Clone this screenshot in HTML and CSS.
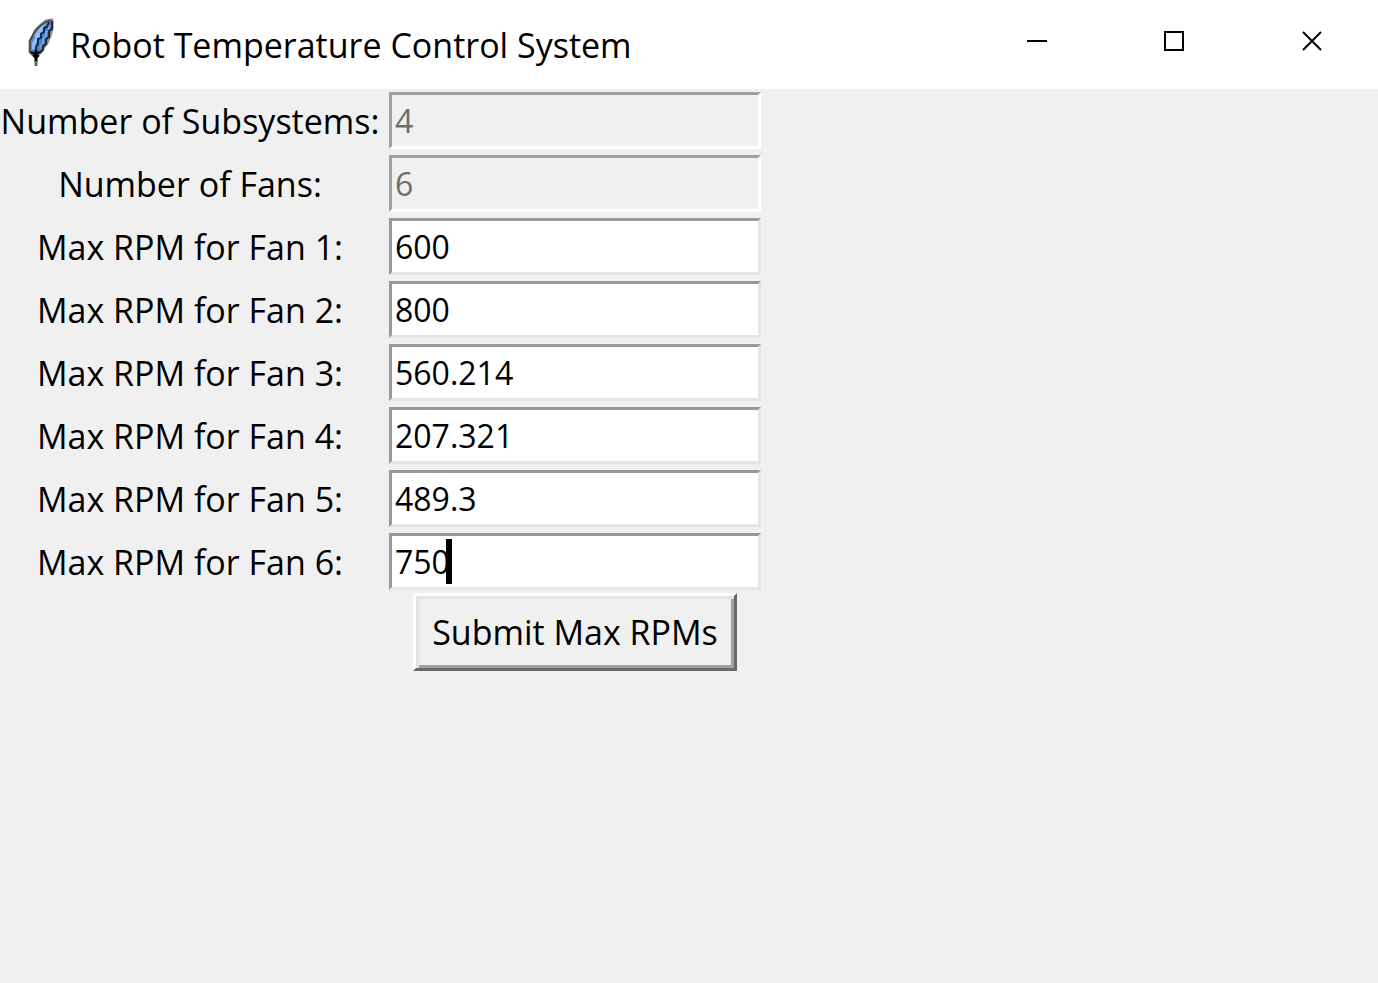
FILE: index.html
```html
<!DOCTYPE html>
<html lang="en">
<head>
<meta charset="utf-8">
<title>Robot Temperature Control System</title>
<link rel="stylesheet" href="styles.css">
</head>
<body>
<header class="titlebar">
  <svg class="app-icon" viewBox="0 0 30 52" aria-hidden="true">
    <path d="M26 3 L20 4 L15 8 L12 11 L9 14 L7 19 L4 24 L4 35 L7 38 L14 36 L17 31 L21 26 L24 19 L26 12 Z" fill="#4585d6" stroke="#8b8f93" stroke-width="3" stroke-linejoin="round"/>
    <path d="M22 5 L16 8 L12 13 L9 17 L9 21 L6 26 L6 32 L8 33 L10 26 L14 21 L14 16 L18 13 L18 9 Z" fill="#8dc0f5"/>
    <path d="M23 8 V13 L20 15 V20 L17 22 V27 L14 30" fill="none" stroke="#6aa8ee" stroke-width="2"/>
    <path d="M23 5 L21 10 L18 11 V15 L15 17 V21 L12 22 V27 L10 30 V38" fill="none" stroke="#152b47" stroke-width="2"/>
    <path d="M26 4 V12 L23 14 V20 L20 22 V27 L17 29 V33 L13 36" fill="none" stroke="#26292d" stroke-width="2.2"/>
    <path d="M25 3 L20 5 L14 9 L10 13 L7 18 L4 24 V35 L9 39" fill="none" stroke="#45494e" stroke-width="1.8"/>
    <path d="M5 35 L10 37 L14 35 M7 38 L10 41 L13 38" fill="none" stroke="#111" stroke-width="2.4"/>
    <path d="M10 33 V45" fill="none" stroke="#000" stroke-width="3"/>
    <path d="M10 44 V49" fill="none" stroke="#666" stroke-width="3"/>
  </svg>
  <h1 class="title">Robot Temperature Control System</h1>
  <div class="controls">
    <button class="control" type="button" aria-label="Minimize"><svg class="glyph" viewBox="0 0 20 20"><path d="M0 10H20"/></svg></button>
    <button class="control" type="button" aria-label="Maximize"><svg class="glyph" viewBox="0 0 20 20"><path d="M1 1H19V19H1Z"/></svg></button>
    <button class="control close" type="button" aria-label="Close"><svg class="glyph" viewBox="0 0 20 20"><path d="M1 1L19 19M19 1L1 19"/></svg></button>
  </div>
</header>
<main>
  <form class="form">
    <label class="label" for="subsystems">Number of Subsystems:</label>
    <input class="field" id="subsystems" type="text" value="4" disabled>
    <label class="label" for="fans">Number of Fans:</label>
    <input class="field" id="fans" type="text" value="6" disabled>
    <label class="label" for="fan1">Max RPM for Fan 1:</label>
    <input class="field" id="fan1" type="text" value="600">
    <label class="label" for="fan2">Max RPM for Fan 2:</label>
    <input class="field" id="fan2" type="text" value="800">
    <label class="label" for="fan3">Max RPM for Fan 3:</label>
    <input class="field" id="fan3" type="text" value="560.214">
    <label class="label" for="fan4">Max RPM for Fan 4:</label>
    <input class="field" id="fan4" type="text" value="207.321">
    <label class="label" for="fan5">Max RPM for Fan 5:</label>
    <input class="field" id="fan5" type="text" value="489.3">
    <label class="label" for="fan6">Max RPM for Fan 6:</label>
    <div class="editing"><input class="field" id="fan6" type="text" value="750"><span class="caret"></span></div>
    <button class="submit" type="button">Submit Max RPMs</button>
  </form>
</main>
</body>
</html>
```
FILE: styles.css
```css
* { box-sizing: border-box; }
body {
  margin: 0;
  min-height: 100vh;
  background: #f0f0f0;
  color: #000;
  font-family: "Open Sans", "Noto Sans", sans-serif;
  font-size: 34px;
}
.titlebar {
  display: flex;
  align-items: center;
  height: 89px;
  padding-left: 26px;
  background: #fff;
}
.app-icon { width: 30px; height: 52px; margin-bottom: 4px; }
.title {
  flex: 1;
  margin: 0 0 0 14px;
  font-size: 34px;
  font-weight: 400;
  line-height: 48px;
  white-space: nowrap;
}
.controls { display: flex; align-self: stretch; }
.control {
  display: flex;
  align-items: center;
  justify-content: center;
  width: 137px;
  padding: 0 0 8px;
  border: 0;
  background: none;
}
.close { width: 136px; padding-left: 4px; }
.glyph {
  width: 20px;
  height: 20px;
  fill: none;
  stroke: #000;
  stroke-width: 2;
}
.form {
  display: grid;
  grid-template-columns: 380px 372px;
  column-gap: 9px;
  row-gap: 6px;
  align-items: center;
  padding-top: 3px;
}
.label { padding-top: 2px; text-align: center; line-height: 55px; white-space: nowrap; }
.field {
  display: block;
  width: 100%;
  height: 57px;
  padding: 0 3px;
  border: 3px solid;
  border-color: #999 #e5e5e5 #e5e5e5 #999;
  border-radius: 0;
  outline: 0;
  background: #fff;
  color: #000;
  font-family: inherit;
  font-size: 32px;
}
.field:disabled {
  border-color: #a0a0a0 #fff #fff #a0a0a0;
  background: #f0f0f0;
  color: #6d6d6d;
}
.editing { position: relative; }
.caret {
  position: absolute;
  top: 6px;
  left: 57px;
  width: 6px;
  height: 45px;
  background: #000;
}
.submit {
  grid-column: 2;
  justify-self: center;
  width: 324px;
  height: 78px;
  margin-top: -3px;
  padding: 0;
  border: 3px solid;
  border-color: #fff #696969 #696969 #fff;
  border-radius: 0;
  box-shadow: inset 3px 3px #e3e3e3, inset -3px -3px #a0a0a0;
  background: #f0f0f0;
  color: #000;
  font: inherit;
  white-space: nowrap;
}
```
